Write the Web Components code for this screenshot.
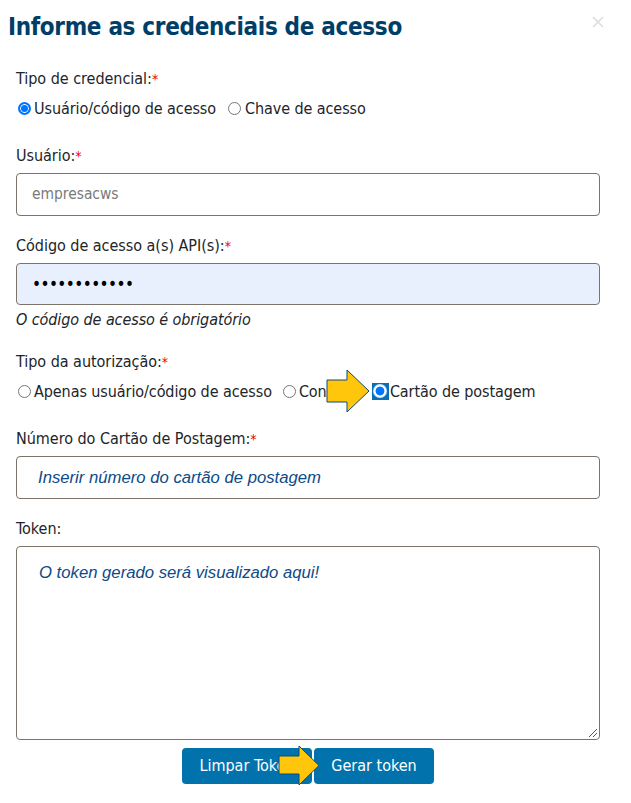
<!DOCTYPE html>
<html lang="pt"><head><meta charset="utf-8"><title>Credenciais</title>
<style>html,body{margin:0;background:#fff}body{font-family:"DejaVu Sans Condensed","DejaVu Sans",sans-serif;font-stretch:condensed}</style></head>
<body>
<cred-dialog>
  <span slot="title">Informe as credenciais de acesso</span>
  <form-field label="Tipo de credencial:" req style="height:77px">
    <radio-group>
      <radio-opt checked>Usuário/código de acesso</radio-opt>
      <radio-opt style="margin-left:1px;gap:4px">Chave de acesso</radio-opt>
    </radio-group>
  </form-field>
  <form-field label="Usuário:" req style="height:90px"><text-box muted>empresacws</text-box></form-field>
  <form-field label="Código de acesso a(s) API(s):" req hint="O código de acesso é obrigatório" style="height:116px"><text-box filled>••••••••••••</text-box></form-field>
  <form-field label="Tipo da autorização:" req style="height:77px">
    <radio-group>
      <radio-opt>Apenas usuário/código de acesso</radio-opt>
      <radio-opt style="width:82px">Con</radio-opt>
      <radio-opt focused checked>Cartão de postagem</radio-opt>
    </radio-group>
    <call-arrow style="left:310px;top:-14px"></call-arrow>
  </form-field>
  <form-field label="Número do Cartão de Postagem:" req style="height:90px"><text-box prompt>Inserir número do cartão de postagem</text-box></form-field>
  <form-field label="Token:"><text-box prompt area>O token gerado será visualizado aqui!</text-box></form-field>
  <action-bar slot="actions">
    <action-btn style="width:130px">Limpar Token</action-btn>
    <action-btn style="width:120px">Gerar token</action-btn>
    <call-arrow small style="left:262px;top:-3px"></call-arrow>
  </action-bar>
</cred-dialog>
<script>
function def(name, css, html){
  customElements.define(name, class extends HTMLElement{
    constructor(){super();const s=this.attachShadow({mode:'open'});s.innerHTML='<style>'+css+'</style>'+(typeof html==='function'?html(this):html);}
  });
}
def('cred-dialog',`
:host{display:block;width:631px;height:803px;box-sizing:border-box;padding:0 31px 0 16px;color:#212529;font-size:16px;overflow:hidden}
header{display:flex;justify-content:space-between;align-items:flex-start;margin:0 -16px 0 -8px;height:70px;padding-top:10px;box-sizing:border-box}
h1{margin:0;font:bold 24px/34px "DejaVu Sans Condensed","DejaVu Sans",sans-serif;color:#003e68;letter-spacing:-.32px}
svg{margin:5px 11px 0 0}
`,`<header><h1><slot name="title"></slot></h1><svg width="14" height="14" viewBox="0 0 14 14" fill="none" stroke="#dcdcdc" stroke-width="1.6"><path d="M2 2l10 10M12 2L2 12"/></svg></header><slot></slot><slot name="actions"></slot>`);

def('form-field',`
:host{display:block;position:relative}
label{display:block;font-size:16px;line-height:18px;letter-spacing:-.03px}
b{font-weight:normal;color:#f00000;font-size:14px}
.body{position:relative;margin-top:8px}
.hint{font-style:italic;font-size:16px;line-height:18px;margin-top:6px;letter-spacing:-.08px}
`,h=>`<label>${h.getAttribute('label')}${h.hasAttribute('req')?'<b>*</b>':''}</label><div class="body"><slot></slot></div>${h.getAttribute('hint')?`<div class="hint">${h.getAttribute('hint')}</div>`:''}`);

def('radio-group',`:host{display:flex;gap:9px;margin-top:12px;height:18px;align-items:center}`,`<slot></slot>`);

def('radio-opt',`
:host{display:inline-flex;align-items:center;gap:3px;font-size:16px;line-height:18px;white-space:nowrap;letter-spacing:-.08px}
u{display:grid;place-items:center;width:13px;height:13px;margin-left:2px;flex:none;position:relative;top:-1px}
i{display:block;box-sizing:border-box;width:13px;height:13px;border-radius:50%;border:1px solid #767676;background:#fff}
:host([checked]) i{border:2px solid #0075ff;box-shadow:inset 0 0 0 1px #fff;background:#0075ff}
:host([focused]){gap:1px}
:host([focused]) u{width:17px;height:17px;margin-left:0;background:#0a6fb5}
:host([focused]) i{width:14px;height:14px;border:0;box-shadow:none;background:radial-gradient(circle,#0075ff 0 4px,#fff 4.8px,#fff 5.6px,#cfe2fb 6.4px)}
`,`<u><i></i></u><span><slot></slot></span>`);

def('text-box',`
:host{display:block;box-sizing:border-box;height:43px;border:1px solid #7c7468;border-radius:4px;padding:0 15px;font-size:15.4px;line-height:41px;background:#fff;color:#212529;white-space:nowrap}
:host([muted]){color:#7a7a7a}
:host([filled]){background:#e8f0fe;color:#000;font-size:17px;letter-spacing:-.57px;height:42px;line-height:40px}
:host([prompt]){color:#0d4a87;font:italic 16.7px/41px "Liberation Sans",sans-serif;padding-left:21px}
:host([area]){height:194px;position:relative;line-height:20px;padding-top:16px;padding-left:22px;white-space:normal}
svg{position:absolute;right:1px;bottom:1px}
`,h=>`<slot></slot>${h.hasAttribute('area')?'<svg width="10" height="10" viewBox="0 0 10 10" stroke="#555" fill="none"><path d="M9 1L1 9M9 5L5 9"/></svg>':''}`);

def('action-bar',`:host{display:flex;justify-content:center;gap:2px;position:relative;margin-top:8px}`,`<slot></slot>`);
def('action-btn',`:host{display:block;box-sizing:border-box;height:36px;background:#0272ad;color:#fff;border-radius:4px;text-align:center;font-size:16px;line-height:36px;white-space:nowrap}`,`<slot></slot>`);
def('call-arrow',`:host{position:absolute;display:block;line-height:0;z-index:2}`,h=>h.hasAttribute('small')
 ?`<svg width="42" height="42" viewBox="0 0 42 42"><path d="M1 11H21V1L41 20.5 21 40V29H1Z" fill="#ffc60b" stroke="#0a4a78"/></svg>`
 :`<svg width="44" height="44" viewBox="0 0 44 44"><path d="M1 11H21V1L43 22 21 43V33H1Z" fill="#ffc60b" stroke="#0a4a78"/></svg>`);
</script>
</body></html>
